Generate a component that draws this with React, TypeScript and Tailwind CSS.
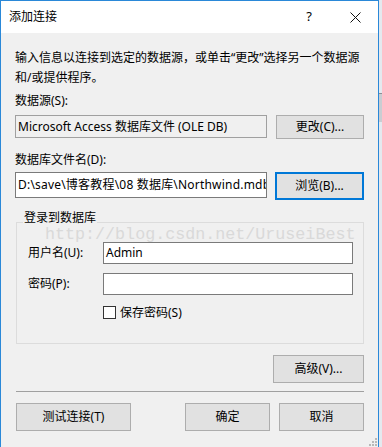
import React from "react";

const font = { fontFamily: '"Noto Sans", "Noto Sans CJK SC", sans-serif' };

function Btn({ children, className = "" }: { children: React.ReactNode; className?: string }) {
  return (
    <div
      className={`flex items-center justify-center bg-[#e1e1e1] border border-[#adadad] text-[12px] text-black ${className}`}
    >
      {children}
    </div>
  );
}

export default function App() {
  return (
    <div className="w-[382px] h-[447px] flex bg-[#dde2e8] overflow-hidden text-[12px] text-black" style={font}>
      <div className="relative w-[379px] h-[447px] flex flex-col bg-[#f0f0f0] border-t border-l border-r border-[#2a88d8]">
        {/* Title bar */}
        <div className="h-[32px] bg-white flex items-center shrink-0">
          <div className="pl-[8px] flex-1 leading-[16px]">添加连接</div>
          <div className="w-[46px] h-full flex items-center justify-center text-[13px]">?</div>
          <div className="w-[46px] h-full flex items-center justify-center">
            <svg width="11" height="11" viewBox="0 0 11 11">
              <path d="M0.5 0.5 L10.5 10.5 M10.5 0.5 L0.5 10.5" stroke="#111" strokeWidth="1" fill="none" />
            </svg>
          </div>
        </div>

        {/* Content */}
        <div className="flex flex-col pl-[14px] pr-[14px]">
          <div className="mt-[15px] leading-[20px] whitespace-nowrap">
            输入信息以连接到选定的数据源，或单击“更改”选择另一个数据源
            <br />
            和/或提供程序。
          </div>

          <div className="mt-[3px] leading-[20px]">数据源(S):</div>
          <div className="mt-[4px] flex gap-[9px] h-[24px]">
            <div className="flex-1 h-[23px] border border-[#a0a0a0] bg-[#f0f0f0] flex items-center pl-[2px] whitespace-nowrap overflow-hidden">
              Microsoft Access 数据库文件 (OLE DB)
            </div>
            <Btn className="w-[88px] h-[24px]">更改(C)...</Btn>
          </div>

          <div className="mt-[11px] leading-[20px]">数据库文件名(D):</div>
          <div className="mt-[2px] flex gap-[8px] h-[28px]">
            <div className="flex-1 min-w-0 h-[26px] border border-[#7a7a7a] bg-white flex items-center pl-[2px] whitespace-nowrap overflow-hidden tracking-[0.2px]">
              D:\save\博客教程\08 数据库\Northwind.mdb
            </div>
            <div className="w-[89px] shrink-0 h-[28px] flex items-center justify-center bg-[#e1e1e1] border-2 border-[#0078d7]">
              浏览(B)...
            </div>
          </div>

          {/* Group box */}
          <fieldset className="mt-[10px] ml-[1px] border border-[#dcdcdc] p-0 m-0 pb-[24px]">
            <legend className="ml-[6px] px-[1px] leading-[16px] pb-[8px]">登录到数据库</legend>
            <div className="mt-[8px] flex items-center h-[22px] pl-[11px] pr-[10px]">
              <div className="w-[75px]">用户名(U):</div>
              <div className="flex-1 h-[22px] border border-[#7a7a7a] bg-white flex items-center pl-[2px]">Admin</div>
            </div>
            <div className="mt-[9px] flex items-center h-[22px] pl-[11px] pr-[10px]">
              <div className="w-[75px]">密码(P):</div>
              <div className="flex-1 h-[22px] border border-[#7a7a7a] bg-white"></div>
            </div>
            <div className="mt-[11px] flex items-center h-[13px] pl-[86px]">
              <div className="w-[13px] h-[13px] border border-[#333333] bg-white"></div>
              <div className="ml-[4px] leading-[13px]">保存密码(S)</div>
            </div>
          </fieldset>

          <div className="mt-[11px] flex justify-end">
            <Btn className="w-[91px] h-[28px]">高级(V)...</Btn>
          </div>

          <div className="mt-[8px] ml-[1px] h-px bg-[#a0a0a0]"></div>

          <div className="mt-[11px] ml-[1px] flex h-[28px]">
            <Btn className="w-[115px] h-[28px]">测试连接(T)</Btn>
            <div className="flex-1"></div>
            <Btn className="w-[85px] h-[28px]">确定</Btn>
            <Btn className="ml-[9px] w-[85px] h-[28px]">取消</Btn>
          </div>
        </div>

        {/* watermark overlay */}
        <div
          className="absolute left-[44px] top-[224px] text-[16.7px] leading-[20px] text-[#d9d9d9] whitespace-nowrap pointer-events-none"
          style={{ fontFamily: '"Liberation Mono", monospace' }}
        >
          http://blog.csdn.net/UruseiBest
        </div>

        {/* resize grip */}
        <svg className="absolute right-[1px] bottom-[1px]" width="9" height="9" viewBox="0 0 9 9">
          <rect x="7" y="1" width="2" height="2" fill="#b8b8b8" />
          <rect x="4" y="4" width="2" height="2" fill="#b8b8b8" />
          <rect x="7" y="4" width="2" height="2" fill="#b8b8b8" />
          <rect x="1" y="7" width="2" height="2" fill="#b8b8b8" />
          <rect x="4" y="7" width="2" height="2" fill="#b8b8b8" />
          <rect x="7" y="7" width="2" height="2" fill="#b8b8b8" />
        </svg>
      </div>
      <div className="flex-1 flex flex-col">
        <div className="h-[93px] bg-[#e4e9ef]"></div>
        <div className="h-px bg-[#8a8f95]"></div>
        <div className="h-[28px] bg-[#c9cdd2]"></div>
        <div className="flex-1 bg-[#e4e9ef]"></div>
      </div>
    </div>
  );
}
